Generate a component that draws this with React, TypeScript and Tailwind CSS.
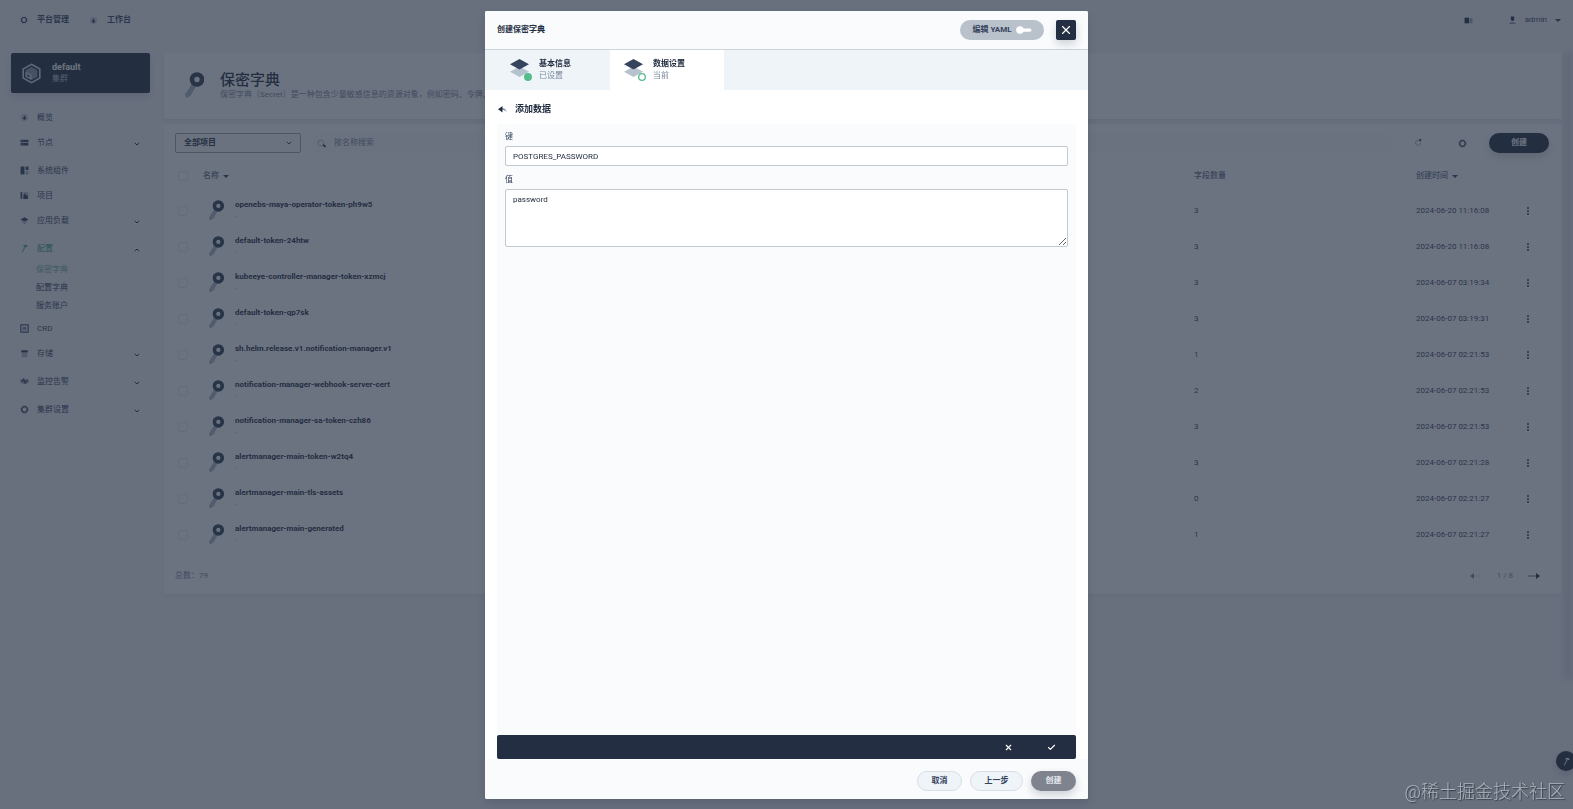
import { ReactNode, useState } from 'react';
import { Check, ChevronDown, ChevronUp, X } from 'lucide-react';

type IconName = 'gear' | 'dashboard' | 'nodes' | 'components' | 'project' | 'stack' | 'hammer' | 'crd' | 'storage' | 'monitor';

type NavItem = {
  label: string;
  icon: IconName;
  expandable?: boolean;
  active?: boolean;
  children?: string[];
};

type Secret = {
  name: string;
  fields: number;
  createdAt: string;
};

const navItems: NavItem[] = [
  { label: '概览', icon: 'dashboard' },
  { label: '节点', icon: 'nodes', expandable: true },
  { label: '系统组件', icon: 'components' },
  { label: '项目', icon: 'project' },
  { label: '应用负载', icon: 'stack', expandable: true },
  { label: '配置', icon: 'hammer', expandable: true, active: true, children: ['保密字典', '配置字典', '服务账户'] },
  { label: 'CRD', icon: 'crd' },
  { label: '存储', icon: 'storage', expandable: true },
  { label: '监控告警', icon: 'monitor', expandable: true },
  { label: '集群设置', icon: 'gear', expandable: true },
];

const secrets: Secret[] = [
  { name: 'openebs-maya-operator-token-ph9w5', fields: 3, createdAt: '2024-06-20 11:16:08' },
  { name: 'default-token-24htw', fields: 3, createdAt: '2024-06-20 11:16:08' },
  { name: 'kubeeye-controller-manager-token-xzmcj', fields: 3, createdAt: '2024-06-07 03:19:34' },
  { name: 'default-token-qp7sk', fields: 3, createdAt: '2024-06-07 03:19:31' },
  { name: 'sh.helm.release.v1.notification-manager.v1', fields: 1, createdAt: '2024-06-07 02:21:53' },
  { name: 'notification-manager-webhook-server-cert', fields: 2, createdAt: '2024-06-07 02:21:53' },
  { name: 'notification-manager-sa-token-czh86', fields: 3, createdAt: '2024-06-07 02:21:53' },
  { name: 'alertmanager-main-token-w2tq4', fields: 3, createdAt: '2024-06-07 02:21:28' },
  { name: 'alertmanager-main-tls-assets', fields: 0, createdAt: '2024-06-07 02:21:27' },
  { name: 'alertmanager-main-generated', fields: 1, createdAt: '2024-06-07 02:21:27' },
];

const iconShapes: Record<IconName, ReactNode> = {
  gear: (
    <>
      <circle cx="8" cy="8" r="6.8" fill="none" stroke="currentColor" strokeWidth="1.4" strokeDasharray="3 2.3" opacity=".5" />
      <circle cx="8" cy="8" r="5" fill="none" stroke="currentColor" strokeWidth="2.4" />
    </>
  ),
  dashboard: (
    <>
      <circle cx="8" cy="8" r="6.5" opacity=".2" />
      <path d="M8 4l3 6H5z" />
      <circle cx="8" cy="10" r="2" />
    </>
  ),
  nodes: (
    <>
      <rect x="1" y="3" width="14" height="4.5" rx="1" />
      <rect x="1" y="9" width="14" height="4.5" rx="1" />
      <path d="M3 5h3M3 11h3" stroke="#fff" opacity=".6" />
    </>
  ),
  components: (
    <>
      <rect x="1" y="1" width="7" height="14" />
      <rect x="10" y="1" width="5" height="6" />
      <rect x="10" y="9" width="5" height="6" opacity=".4" />
    </>
  ),
  project: (
    <>
      <rect x="1" y="2" width="3" height="12" />
      <path d="M6 14V8l3-4 2 4h3v6z" />
      <rect x="6" y="2" width="9" height="12" opacity=".3" />
    </>
  ),
  stack: (
    <>
      <path d="M8 2l7 4-7 4-7-4z" />
      <path d="M2 9l6 5 6-5-6 3z" opacity=".6" />
    </>
  ),
  hammer: (
    <>
      <path d="M3 14.5l5-10 2 1-5 9.5z" opacity=".75" />
      <path d="M6 2l5-.5 3 3.5-2 .5-6-1.5z" />
    </>
  ),
  crd: (
    <>
      <rect x="1.5" y="1.5" width="13" height="13" fill="none" stroke="currentColor" strokeWidth="2" />
      <path d="M4.5 6h7M4.5 8h7M4.5 10.5h7" stroke="currentColor" strokeWidth="1.2" />
    </>
  ),
  storage: (
    <>
      <rect x="2" y="2" width="12" height="4" rx="1" />
      <rect x="3" y="7.5" width="10" height="2.5" opacity=".5" />
      <rect x="3" y="11.5" width="10" height="2.5" opacity=".5" />
    </>
  ),
  monitor: (
    <>
      <rect x="1" y="3" width="14" height="9" rx="3" opacity=".4" />
      <path d="M1 7h4l1.5-3L9 11l2-4h4" fill="none" stroke="currentColor" strokeWidth="2" />
    </>
  ),
};

const Icon = ({ name, className = 'size-[9px]' }: { name: IconName; className?: string }) => (
  <svg viewBox="0 0 16 16" fill="currentColor" className={`shrink-0 ${className}`} aria-hidden="true">
    {iconShapes[name]}
  </svg>
);

const KeyIcon = ({ className }: { className: string }) => (
  <svg viewBox="0 0 20 28" className={`shrink-0 ${className}`} aria-hidden="true">
    <path d="M9 10l4 2.5L6.500 24 2 26l-1-3.500z" fill="#a9b6c3" />
    <circle cx="13" cy="7.5" r="5" fill="none" stroke="#324558" strokeWidth="4.6" />
  </svg>
);

const LayersIcon = ({ done }: { done: boolean }) => (
  <svg viewBox="0 0 24 24" className="size-6 shrink-0" aria-hidden="true">
    <path d="M9.5 8.5l9.5 5.2-9.5 5.300L0 13.700z" fill="#b6c2cd" />
    <path d="M9.5 1L19 6.200 9.500 11.500 0 6.200z" fill="#36435c" />
    <circle cx="18" cy="19" r="3.3" fill={done ? '#55bc8a' : '#fff'} stroke="#55bc8a" strokeWidth="1.3" />
  </svg>
);

const Caret = () => <span className="inline-block border-x-[3px] border-t-[3px] border-x-transparent border-t-[#36435c]" />;

const TopBar = () => (
  <header className="flex h-10 items-center px-5 font-bold">
    <a href="#platform" className="flex items-center gap-[9px]">
      <Icon name="gear" className="size-2" />
      平台管理
    </a>
    <a href="#workbench" className="ml-5 flex items-center gap-[9px]">
      <Icon name="dashboard" />
      工作台
    </a>
    <a href="#docs" aria-label="文档" className="ml-auto">
      <svg viewBox="0 0 16 16" className="size-[9px]">
        <path d="M1 3h8v10H1z" fill="#242e42" />
        <path d="M10 4h5v9h-5z" fill="#9aa6b4" />
      </svg>
    </a>
    <button type="button" className="-mr-2 ml-[35px] flex items-center gap-2 font-normal">
      <svg viewBox="0 0 16 16" className="size-[9px]" aria-hidden="true">
        <path d="M5 1h6v5L9 9H7L5 6z" fill="#242e42" />
        <path d="M2 14c1-4 11-4 12 0z" fill="#8896a6" />
      </svg>
      admin
      <span className="inline-flex">
        <Caret />
      </span>
    </button>
  </header>
);

const Sidebar = () => (
  <aside className="w-[139px] shrink-0">
    <button type="button" className="flex h-10 w-full items-center gap-[10px] rounded-[2px] bg-[#242e42] px-[10px] text-left shadow-[0_4px_8px_rgba(36,46,66,0.15)]">
      <svg viewBox="0 0 24 24" className="size-[21px]" aria-hidden="true">
        <path d="M12 1.5l9.5 5.3v10.4L12 22.5l-9.5-5.3V6.8z" fill="none" stroke="#d8dee5" strokeWidth="1.8" />
        <path d="M12 4.5l6.8 3.8v7.4L12 19.5l-6.8-3.8V8.3z" fill="#8b97a6" />
        <path d="M5.2 10l6.800 3.500v6l-6.800-3.800z" fill="#d8dee5" />
        <path d="M7 12.5l3 1.7v2.5L7 15z" fill="#36435c" />
      </svg>
      <span>
        <strong className="block text-[9px] leading-3 text-white">default</strong>
        <span className="block leading-3 text-[#b6c2cd]">集群</span>
      </span>
    </button>
    <nav className="mt-3 pl-[9px]">
      {navItems.map((item) => (
        <div key={item.label} className={item.children ? 'mb-px' : item.expandable ? 'mb-[3px]' : ''}>
          <a
            href={`#${item.label}`}
            className={`flex h-[25px] items-center gap-2 pr-[9px] ${item.active ? 'text-[#329a7c]' : 'text-[#36435c]'}`}
          >
            <Icon name={item.icon} />
            {item.label}
            {item.expandable && (
              <span className="ml-auto pt-[3px] text-[#242e42]">
                {item.children ? <ChevronUp className="size-2" strokeWidth={3} /> : <ChevronDown className="size-2" strokeWidth={3} />}
              </span>
            )}
          </a>
          {item.children?.map((child, index) => (
            <a
              key={child}
              href={`#${child}`}
              className={`flex h-[18px] items-center pl-4 ${index === 0 ? 'text-[#6fae96]' : 'text-[#36435c]'}`}
            >
              {child}
            </a>
          ))}
        </div>
      ))}
    </nav>
  </aside>
);

const Banner = () => (
  <section className="flex h-[66px] items-center gap-4 overflow-hidden rounded-[2px] bg-white pl-5 shadow-[0_3px_6px_rgba(36,46,66,0.08)]">
    <KeyIcon className="h-7 w-5" />
    <div className="min-w-0">
      <h1 className="text-[15px] leading-[18px] font-medium text-[#242e42]">保密字典</h1>
      <p className="truncate leading-3 text-[#79879c]">
        保密字典（Secret）是一种包含少量敏感信息的资源对象，例如密码、令牌、保密字典等。
      </p>
    </div>
  </section>
);

const SecretTable = () => (
  <section className="mt-[5px] rounded-[2px] bg-white px-[11px] shadow-[0_3px_6px_rgba(36,46,66,0.05)]">
    <div className="flex items-center pt-[9px]">
      <div className="relative">
        <select
          aria-label="项目"
          className="h-5 w-[126px] appearance-none rounded-[2px] border border-[#9aa6b4] bg-[#f9fbfd] px-2 font-bold text-[#242e42]"
        >
          <option>全部项目</option>
        </select>
        <ChevronDown className="pointer-events-none absolute top-[6px] right-2 size-2" strokeWidth={3} />
      </div>
      <label className="ml-2 flex h-5 flex-1 items-center gap-2 rounded-full bg-[#f9fbfd] px-2">
        <svg viewBox="0 0 16 16" className="size-[9px]" aria-hidden="true">
          <circle cx="7" cy="7" r="5" fill="none" stroke="#c3ccd6" strokeWidth="2" />
          <path d="M11 10l4 4" stroke="#242e42" strokeWidth="3" />
        </svg>
        <input aria-label="按名称搜索" placeholder="按名称搜索" className="min-w-0 flex-1 bg-transparent placeholder:text-[#79879c]" />
      </label>
      <button type="button" aria-label="刷新" className="ml-5">
        <svg viewBox="0 0 16 16" className="size-2">
          <path d="M13 8a5 5 0 1 1-4-5" fill="none" stroke="#9aa6b4" strokeWidth="1.8" />
          <path d="M9 1l6-1-2 6z" fill="#242e42" />
        </svg>
      </button>
      <button type="button" aria-label="自定义列" className="mr-[22px] ml-9">
        <Icon name="gear" />
      </button>
      <button type="button" className="mr-[2px] h-5 w-[60px] rounded-full bg-[#242e42] font-bold text-white shadow-[0_4px_8px_rgba(36,46,66,0.2)]">
        创建
      </button>
    </div>
    <table className="mt-[6px] w-full table-fixed text-left">
      <thead>
        <tr className="h-[34px] text-[#5f708a]">
          <th className="w-7">
            <input type="checkbox" aria-label="全选" className="ml-[3px] block size-[10px] appearance-none rounded-[2px] border border-[#e3e9ef]" />
          </th>
          <th className="font-medium">
            <button type="button" className="flex items-center gap-1">
              名称 <Caret />
            </button>
          </th>
          <th className="w-[222px] font-medium">字段数量</th>
          <th className="w-[103px] font-medium">
            <button type="button" className="flex items-center gap-1">
              创建时间 <Caret />
            </button>
          </th>
          <th className="w-8" aria-label="操作" />
        </tr>
      </thead>
      <tbody>
        {secrets.map((secret) => (
          <tr key={secret.name} className="h-9">
            <td>
              <input
                type="checkbox"
                aria-label={secret.name}
                className="ml-[3px] block size-[10px] appearance-none rounded-[2px] border border-[#e3e9ef]"
              />
            </td>
            <td>
              <div className="flex items-center gap-[11px] pl-[5px]">
                <KeyIcon className="h-[22px] w-4" />
                <div>
                  <a href={`#${secret.name}`} className="block leading-3 font-bold text-[#242e42]">
                    {secret.name}
                  </a>
                  <p className="leading-3 text-[#b6c2cd]">-</p>
                </div>
              </div>
            </td>
            <td>{secret.fields}</td>
            <td className="whitespace-nowrap">{secret.createdAt}</td>
            <td>
              <button type="button" aria-label="更多操作" className="block px-[7px]">
                <svg viewBox="0 0 4 10" className="h-[10px] w-1" fill="#242e42">
                  <circle cx="2" cy="2" r=".9" />
                  <circle cx="2" cy="5" r=".9" />
                  <circle cx="2" cy="8" r=".9" />
                </svg>
              </button>
            </td>
          </tr>
        ))}
      </tbody>
    </table>
    <footer className="mt-[5px] flex h-9 items-center text-[#79879c]">
      <span>总数：79</span>
      <button type="button" aria-label="上一页" className="ml-auto text-[#79879c]">
        <svg viewBox="0 0 12 8" className="h-2 w-3">
          <path d="M4 4h8" stroke="#d8dee5" />
          <path d="M0 4l4-3v6z" fill="currentColor" />
        </svg>
      </button>
      <span className="mx-[15px]">1 / 8</span>
      <button type="button" aria-label="下一页" className="mr-[11px] text-[#242e42]">
        <svg viewBox="0 0 12 8" className="h-2 w-3">
          <path d="M0 4h8" stroke="#5f708a" />
          <path d="M12 4L8 1v6z" fill="currentColor" />
        </svg>
      </button>
    </footer>
  </section>
);

const steps = [
  { title: '基本信息', status: '已设置', done: true },
  { title: '数据设置', status: '当前', done: false },
];

const CreateModal = () => {
  const [key, setKey] = useState('POSTGRES_PASSWORD');
  const [value, setValue] = useState('password');

  return (
    <div className="fixed inset-0 flex justify-center bg-[#242e42]/67 pt-[11px] pb-[10px]">
      <div role="dialog" aria-label="创建保密字典" className="flex w-full max-w-[603px] flex-col overflow-hidden rounded-[2px] bg-white shadow-[0_4px_8px_rgba(36,46,66,0.2)]">
        <header className="flex h-[39px] shrink-0 items-center border-b border-[#ccd3db] bg-[#f9fbfd] px-3">
          <h2 className="font-bold text-[#242e42]">创建保密字典</h2>
          <button type="button" className="ml-auto flex h-5 w-[84px] items-center justify-center gap-1 rounded-full bg-[#b9c1cb] font-bold text-[#36435c]">
            编辑 YAML
            <svg viewBox="0 0 16 8" className="h-2 w-4" fill="#fff" aria-hidden="true">
              <circle cx="4" cy="4" r="3.8" />
              <rect x="4" y="2.5" width="11.5" height="3.2" rx="1.6" />
            </svg>
          </button>
          <button
            type="button"
            aria-label="关闭"
            className="ml-3 flex size-5 items-center justify-center rounded-[2px] bg-[#242e42] text-white shadow-[0_4px_8px_rgba(36,46,66,0.2)]"
          >
            <X className="size-[14px]" strokeWidth={2} />
          </button>
        </header>
        <ol className="flex h-10 shrink-0 bg-[#eff4f9] pl-[11px]">
          {steps.map((step) => (
            <li key={step.title} className={`flex w-[114px] items-center gap-[5px] pl-[14px] ${step.done ? '' : 'bg-white'}`}>
              <LayersIcon done={step.done} />
              <div>
                <p className="leading-3 font-bold text-[#242e42]">{step.title}</p>
                <p className="leading-3 text-[#79879c]">{step.status}</p>
              </div>
            </li>
          ))}
        </ol>
        <div className="flex flex-1 flex-col px-3">
          <div className="flex h-[34px] items-center gap-2 pt-1">
            <button type="button" aria-label="返回">
              <svg viewBox="0 0 20 14" className="h-[7px] w-[10px]">
                <path d="M10 4c5 0 8 2 9 8-2-3-5-4-9-4z" fill="#8896a6" />
                <path d="M2 6.5L11 0v13z" fill="#242e42" />
              </svg>
            </button>
            <h3 className="text-[9px] font-bold text-[#242e42]">添加数据</h3>
          </div>
          <div className="flex flex-1 flex-col bg-[#f9fbfd] px-2 pt-[7px]">
            <label htmlFor="secret-key" className="leading-3">
              键
            </label>
            <input
              id="secret-key"
              value={key}
              onChange={(event) => setKey(event.target.value)}
              className="mt-[3px] h-5 rounded-[2px] border border-[#c1c9d1] bg-white px-[7px] text-[#242e42]"
            />
            <label htmlFor="secret-value" className="mt-2 leading-3">
              值
            </label>
            <textarea
              id="secret-value"
              value={value}
              onChange={(event) => setValue(event.target.value)}
              className="mt-[3px] h-[58px] rounded-[2px] border border-[#c1c9d1] bg-white px-[7px] py-1 leading-3 text-[#242e42]"
            />
          </div>
          <div className="flex h-6 items-center justify-end gap-[34px] rounded-[2px] bg-[#242e42] pr-5 text-white">
            <button type="button" aria-label="取消添加">
              <X className="size-[9px]" strokeWidth={3} />
            </button>
            <button type="button" aria-label="确认添加">
              <Check className="size-[9px]" strokeWidth={3} />
            </button>
          </div>
        </div>
        <footer className="flex h-10 shrink-0 items-center justify-end gap-2 bg-[#f9fbfd] px-3 pt-1 font-bold">
          <button type="button" className="h-5 w-[45px] rounded-full border border-[#d8dee5] bg-[#eff4f9]">
            取消
          </button>
          <button type="button" className="h-5 w-[53px] rounded-full border border-[#d8dee5] bg-[#eff4f9]">
            上一步
          </button>
          <button type="button" disabled className="h-5 w-[45px] rounded-full bg-[#7f838d] text-[#e3e9ef] shadow-[0_4px_8px_rgba(36,46,66,0.2)]">
            创建
          </button>
        </footer>
      </div>
    </div>
  );
};

const App = () => (
  <div className="relative min-h-screen overflow-hidden bg-[#f3f5f9] font-[Roboto,'Noto_Sans_CJK_SC',sans-serif] text-[8px] leading-3 text-[#36435c]">
    <TopBar />
    <div className="flex gap-[14px] pt-[13px] pr-[11px] pl-[11px]">
      <Sidebar />
      <main className="min-w-0 flex-1">
        <Banner />
        <SecretTable />
      </main>
    </div>
    <div className="absolute top-[52px] right-0 h-[628px] w-[10px] bg-[#dde3ea] blur-[2px]" />
    <button
      type="button"
      aria-label="工具箱"
      className="absolute -right-[3px] bottom-[38px] flex size-5 items-center justify-center rounded-full bg-[#242e42] text-white shadow-[0_4px_8px_rgba(36,46,66,0.2)]"
    >
      <Icon name="hammer" />
    </button>
    <CreateModal />
    <p className="fixed right-2 bottom-[5px] text-[18px] leading-6 font-light text-[#c3c8d0]/80 [text-shadow:1px_1px_1px_rgba(30,36,48,0.7)]">
      @稀土掘金技术社区
    </p>
  </div>
);

export default App;
